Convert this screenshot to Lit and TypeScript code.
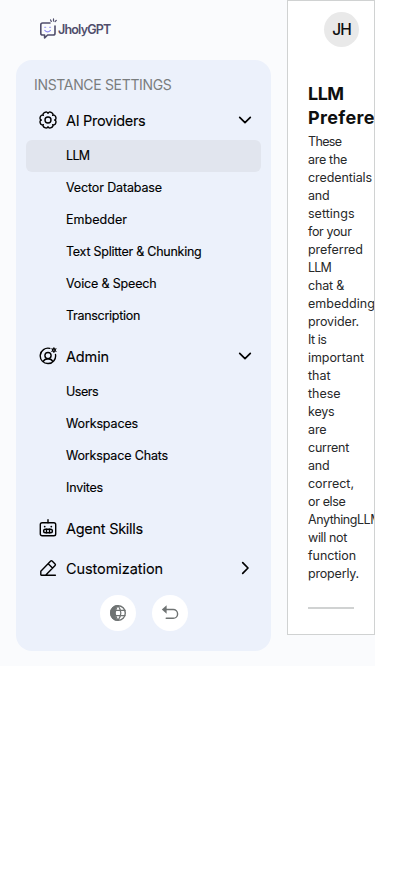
import { LitElement, html, css, svg } from "lit";
import { customElement, property } from "lit/decorators.js";

/** A single line of text whose tracking is adjusted to fill a set width. */
@customElement("fit-label")
class FitLabel extends LitElement {
  @property({ type: Number }) width = 0;
  @property() text = "";
  static styles = css`
    :host { display: block; white-space: nowrap; }
    .text { display: inline-block; }
  `;
  render() {
    return html`<span class="text">${this.text}</span>`;
  }
  updated() {
    const span = this.renderRoot.querySelector<HTMLElement>(".text")!;
    span.style.letterSpacing = "0";
    const natural = span.getBoundingClientRect().width;
    if (this.width && this.text.length) {
      span.style.letterSpacing = `${(this.width - natural) / this.text.length}px`;
    }
  }
}

const gearPath = (() => {
  const at = (r: number, deg: number) => {
    const a = (deg * Math.PI) / 180;
    return `${(9 + r * Math.cos(a)).toFixed(2)} ${(9 + r * Math.sin(a)).toFixed(2)}`;
  };
  let d = `M${at(6.6, 0)}`;
  for (let i = 0; i < 8; i++) {
    const b = i * 45;
    d += `C${at(9.6, b + 3)} ${at(9.6, b + 42)} ${at(6.6, b + 45)}`;
  }
  return d + "Z";
})();

const icons = {
  gear: svg`<path d=${gearPath}/><circle cx="9" cy="9" r="3"/>`,
  admin: svg`<path d="M10.8 1.4A7.7 7.7 0 1 0 16.5 7.5M4 14.7C6 10.7 12 10.7 14 14.7"/><circle cx="9" cy="8.6" r="3.1"/><circle cx="14.9" cy="3.1" r="1.3"/><path stroke-width="1" d="M14.9.6v1.1M14.9 4.5v1.1M12.7 1.9l1 .5M16.1 3.8l1 .5M12.7 4.3l1-.5M16.1 2.4l1-.5"/>`,
  robot: svg`<rect x="1.3" y="3.8" width="15.4" height="13" rx="1.8"/><path d="M9 .7v3"/><rect x="4.6" y="10.2" width="8.8" height="3.6" rx="1.8"/><path d="M7.5 10.2v3.6M10.5 10.2v3.6"/><circle cx="5.7" cy="7.6" r=".9" fill="currentColor" stroke="none"/><circle cx="12.3" cy="7.6" r=".9" fill="currentColor" stroke="none"/>`,
  pencil: svg`<path d="M6.6 16.3H2.4a.6.6 0 0 1-.6-.6v-3.5L11.7 2.1a1 1 0 0 1 1.4 0l3 3a1 1 0 0 1 0 1.4L6.6 16.3H16.4M9.2 4.7l4.3 4.3"/>`,
};

interface Leaf { text: string; w: number; active?: boolean }
interface Group { text: string; w: number; icon: keyof typeof icons; arrow?: "down" | "right"; items?: Leaf[] }

const groups: Group[] = [
  { text: "AI Providers", w: 79.5, icon: "gear", arrow: "down", items: [
    { text: "LLM", w: 23.5, active: true },
    { text: "Vector Database", w: 96 },
    { text: "Embedder", w: 61 },
    { text: "Text Splitter & Chunking", w: 135.5 },
    { text: "Voice & Speech", w: 90.5 },
    { text: "Transcription", w: 74 },
  ] },
  { text: "Admin", w: 43, icon: "admin", arrow: "down", items: [
    { text: "Users", w: 32 },
    { text: "Workspaces", w: 72 },
    { text: "Workspace Chats", w: 102 },
    { text: "Invites", w: 37 },
  ] },
  { text: "Agent Skills", w: 77, icon: "robot" },
  { text: "Customization", w: 97, icon: "pencil", arrow: "right" },
];

const description: [string, number][] = [
  ["These", 33.5], ["are the", 39], ["credentials", 64], ["and", 21.5],
  ["settings", 46.5], ["for your", 43.5], ["preferred", 55], ["LLM", 23],
  ["chat &", 36], ["embedding", 67], ["provider.", 51], ["It is", 18.5],
  ["important", 56], ["that", 22.5], ["these", 32.5], ["keys", 26.5], ["are", 18.5],
  ["current", 41], ["and", 21.5], ["correct,", 46], ["or else", 37.5],
  ["AnythingLLM", 73], ["will not", 39], ["function", 48], ["properly.", 51],
];

@customElement("app-root")
class AppRoot extends LitElement {
  static styles = css`
    :host { display: block; height: 875px; background: #fff; overflow: hidden; }
    * { box-sizing: border-box; }
    svg { display: block; fill: none; stroke: currentColor; stroke-width: 1.4; stroke-linecap: round; stroke-linejoin: round; flex: none; }
    .shell { width: 375px; height: 666px; background: #fafbfd; display: flex; align-items: flex-start; gap: 16px; padding-left: 16px; overflow: hidden; font-family: Inter, "Noto Sans", sans-serif; color: #0e0f0f; }
    .side { width: 255px; flex: none; color: #000; }
    .brand { height: 60px; padding: 18px 0 0 23px; display: flex; gap: 1px; color: #504e6c; }
    .brand fit-label { font-size: 12.5px; font-weight: 600; line-height: 24px; }
    .panel { height: 591px; background: #ecf1fb; border-radius: 16px; padding: 10px; }
    .heading { height: 30px; padding: 0 8px; line-height: 29px; font-size: 14px; color: #7a7d7e; }
    .row { height: 40px; display: flex; align-items: center; padding: 0 9px 0 13px; gap: 9px; font-size: 14.5px; font-weight: 400; -webkit-text-stroke: 0.1px currentColor; }
    .row .arrow { margin-left: auto; stroke-width: 1.7; }
    .items { margin-bottom: 4px; }
    .leaf { height: 32px; line-height: 31px; padding-left: 40px; border-radius: 6px; font-size: 12.5px; font-weight: 400; -webkit-text-stroke: 0.15px currentColor; }
    .leaf.active { background: #e1e5ee; }
    .foot { display: flex; justify-content: center; gap: 16px; margin-top: 7px; }
    .round { width: 36px; height: 36px; border-radius: 50%; background: #fff; display: grid; place-items: center; color: #6f7373; }
    .main { width: 88px; height: 635px; flex: none; background: #fff; border: 1px solid #d0d2d2; padding: 11px 0 0 20px; overflow: hidden; }
    .avatar { width: 35px; height: 35px; margin-left: 16px; border-radius: 50%; background: #e9e9e9; display: grid; place-items: center; font-size: 15.5px; font-weight: 500; }
    .title { margin: 35px 0 3px; font-size: 18px; line-height: 24px; font-weight: 700; }
    .description { font-size: 12.5px; line-height: 18px; color: #27292a; }
    .rule { width: 46px; height: 2px; background: #d0d2d2; margin-top: 24px; }
  `;

  renderGroup(g: Group) {
    return html`
      <div class="row">
        <svg width="18" height="18" viewBox="0 0 18 18">${icons[g.icon]}</svg>
        <fit-label .text=${g.text} .width=${g.w}></fit-label>
        ${g.arrow
          ? html`<svg class="arrow" width="14" height="14" viewBox="0 0 14 14">
              <path d=${g.arrow === "down" ? "M1.7 4.3 7 9.6 12.3 4.3" : "M4.7 1.7 10 7 4.7 12.3"} /></svg>`
          : ""}
      </div>
      ${g.items
        ? html`<div class="items">${g.items.map((l) => html`
            <div class="leaf ${l.active ? "active" : ""}"><fit-label .text=${l.text} .width=${l.w}></fit-label></div>`)}</div>`
        : ""}
    `;
  }

  render() {
    return html`
      <div class="shell">
        <div class="side">
          <div class="brand">
            <svg width="18" height="22" viewBox="0 0 18 22">
              <path stroke-width="1.6" d="M11 5H3.6A1.8 1.8 0 0 0 1.8 6.8v8.4A1.8 1.8 0 0 0 3.6 17h2v3l3-3h5.6a1.8 1.8 0 0 0 1.8-1.8V8" />
              <path stroke-width="1.2" d="M11.6 1.9l.7 1.5M14.5.9v2.2M17.3 2.3l-1.2 1.2" />
              <path stroke="#8d8bf0" stroke-width="1.1" d="M5.7 9.3h1M10.6 9.3h1M5.8 12.4c1.7 2 4 2 5.7 0" />
            </svg>
            <fit-label .text=${"JholyGPT"} .width=${52.5}></fit-label>
          </div>
          <div class="panel">
            <div class="heading"><fit-label .text=${"INSTANCE SETTINGS"} .width=${137.5}></fit-label></div>
            ${groups.map((g) => this.renderGroup(g))}
            <div class="foot">
              <div class="round">
                <svg width="18" height="18" viewBox="0 0 18 18">
                  <path d="M9 1a8 8 0 0 0 0 16C5.2 12.5 5.2 5.5 9 1Z" fill="currentColor" stroke="none" />
                  <circle cx="9" cy="9" r="7.3" />
                  <path stroke-width="1.2" d="M9 1.7c-3.5 4.5-3.5 10.1 0 14.6 3.5-4.5 3.5-10.1 0-14.6ZM6.4 6.4h9.6M6.4 11.6h9.6" />
                </svg>
              </div>
              <div class="round">
                <svg width="18" height="18" viewBox="0 0 18 18">
                  <path d="M5.6 1.2v8.6L.8 5.5Z" fill="currentColor" stroke="none" />
                  <path d="M5 5.5h7.2a4.3 4.3 0 0 1 0 8.8H5.2" />
                </svg>
              </div>
            </div>
          </div>
        </div>
        <div class="main">
          <div class="avatar"><fit-label .text=${"JH"} .width=${18.5}></fit-label></div>
          <div class="title">
            <fit-label .text=${"LLM"} .width=${35.5}></fit-label>
            <fit-label .text=${"Preferences"} .width=${111}></fit-label>
          </div>
          <div class="description">
            ${description.map(([t, w]) => html`<fit-label .text=${t} .width=${w}></fit-label>`)}
          </div>
          <div class="rule"></div>
        </div>
      </div>
    `;
  }
}
